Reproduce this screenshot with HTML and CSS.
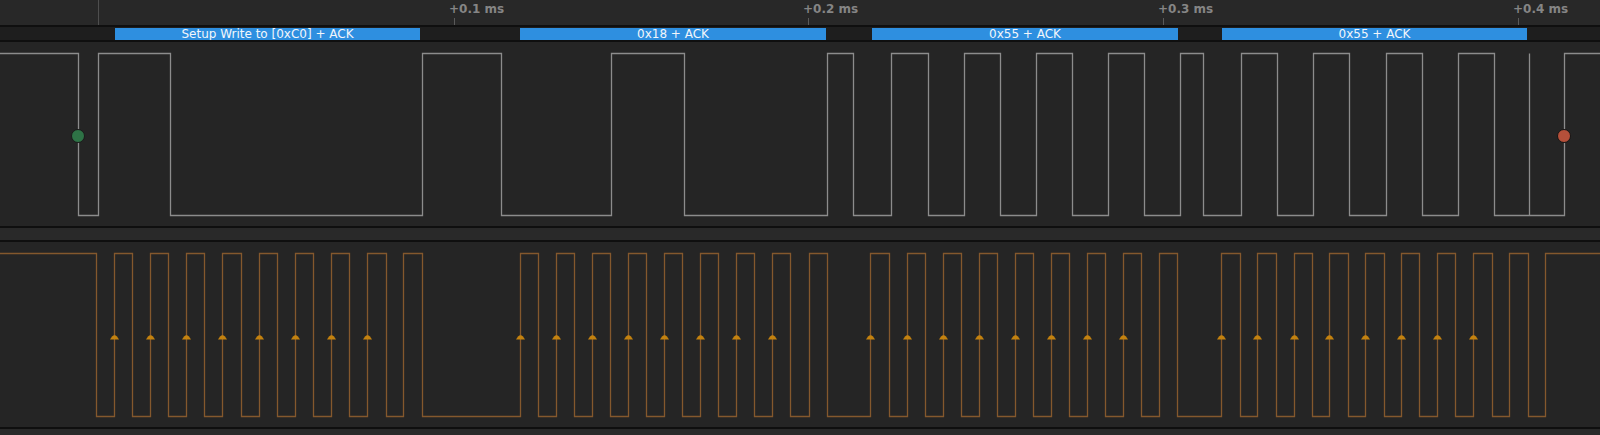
FILE: index.html
```html
<!DOCTYPE html>
<html>
<head>
<meta charset="utf-8">
<link rel="stylesheet" href="styles.css">
</head>
<body>
<div class="app">
  <div class="header">
    <div class="start-line"></div>
    <div class="tick" style="left:449px"><span class="tick-label">+0.1 ms</span><span class="tick-mark"></span></div>
    <div class="tick" style="left:803px"><span class="tick-label">+0.2 ms</span><span class="tick-mark"></span></div>
    <div class="tick" style="left:1158px"><span class="tick-label">+0.3 ms</span><span class="tick-mark"></span></div>
    <div class="tick" style="left:1513px"><span class="tick-label">+0.4 ms</span><span class="tick-mark"></span></div>
  </div>
  <div class="rule"></div>
  <div class="annot">
    <div class="bar" style="left:115px;width:305px">Setup Write to [0xC0] + ACK</div>
    <div class="bar" style="left:520px;width:306px">0x18 + ACK</div>
    <div class="bar" style="left:872px;width:306px">0x55 + ACK</div>
    <div class="bar" style="left:1222px;width:305px">0x55 + ACK</div>
  </div>
  <div class="rule"></div>
  <div class="chan chan-sda">
    <svg class="wave" width="1600" height="184" viewBox="0 0 1600 184">
      <path class="sda" d="M0 11.5 H78.5 V173.5 H98.5 V11.5 H170.5 V173.5 H422.5 V11.5 H501.5 V173.5 H611.5 V11.5 H684.5 V173.5 H827.5 V11.5 H853.5 V173.5 H891.5 V11.5 H928.5 V173.5 H964.5 V11.5 H1000.5 V173.5 H1036.5 V11.5 H1072.5 V173.5 H1108.5 V11.5 H1144.5 V173.5 H1180.5 V11.5 H1203.5 V173.5 H1241.5 V11.5 H1277.5 V173.5 H1313.5 V11.5 H1349.5 V173.5 H1386.5 V11.5 H1422.5 V173.5 H1458.5 V11.5 H1494.5 V173.5 H1564.5 V11.5 H1600 M1529.5 11.5 V173.5"/>
      <circle class="mark-start" cx="78" cy="94" r="6.5"/>
      <circle class="mark-stop" cx="1564" cy="94" r="6.5"/>
    </svg>
  </div>
  <div class="rule"></div>
  <div class="gap"></div>
  <div class="rule"></div>
  <div class="chan chan-scl">
    <svg class="wave" width="1600" height="185" viewBox="0 0 1600 185">
      <defs>
        <path id="arr" d="M-4.5 97.5 L-2.5 94.5 Q0 92 2.5 94.5 L4.5 97.5 Z"/>
      </defs>
      <path class="scl" d="M0 11.5 H96.5 V174.5 H114.5 V11.5 H132.5 V174.5 H150.5 V11.5 H168.5 V174.5 H186.5 V11.5 H204.5 V174.5 H222.5 V11.5 H241.5 V174.5 H259.5 V11.5 H277.5 V174.5 H295.5 V11.5 H313.5 V174.5 H331.5 V11.5 H349.5 V174.5 H367.5 V11.5 H386.5 V174.5 H403.5 V11.5 H422.5 V174.5 H520.5 V11.5 H538.5 V174.5 H556.5 V11.5 H574.5 V174.5 H592.5 V11.5 H610.5 V174.5 H628.5 V11.5 H646.5 V174.5 H664.5 V11.5 H682.5 V174.5 H700.5 V11.5 H718.5 V174.5 H736.5 V11.5 H754.5 V174.5 H772.5 V11.5 H790.5 V174.5 H809.5 V11.5 H827.5 V174.5 H870.5 V11.5 H889.5 V174.5 H907.5 V11.5 H925.5 V174.5 H943.5 V11.5 H961.5 V174.5 H979.5 V11.5 H997.5 V174.5 H1015.5 V11.5 H1033.5 V174.5 H1051.5 V11.5 H1069.5 V174.5 H1087.5 V11.5 H1105.5 V174.5 H1123.5 V11.5 H1141.5 V174.5 H1159.5 V11.5 H1177.5 V174.5 H1221.5 V11.5 H1240.5 V174.5 H1257.5 V11.5 H1276.5 V174.5 H1294.5 V11.5 H1312.5 V174.5 H1329.5 V11.5 H1348.5 V174.5 H1365.5 V11.5 H1384.5 V174.5 H1401.5 V11.5 H1419.5 V174.5 H1437.5 V11.5 H1455.5 V174.5 H1473.5 V11.5 H1492.5 V174.5 H1509.5 V11.5 H1528.5 V174.5 H1545.5 V11.5 H1600"/>
      <g class="arrows">
        <use href="#arr" x="114.5"/><use href="#arr" x="150.5"/><use href="#arr" x="186.5"/><use href="#arr" x="222.5"/>
        <use href="#arr" x="259.5"/><use href="#arr" x="295.5"/><use href="#arr" x="331.5"/><use href="#arr" x="367.5"/>
        <use href="#arr" x="520.5"/><use href="#arr" x="556.5"/><use href="#arr" x="592.5"/><use href="#arr" x="628.5"/>
        <use href="#arr" x="664.5"/><use href="#arr" x="700.5"/><use href="#arr" x="736.5"/><use href="#arr" x="772.5"/>
        <use href="#arr" x="870.5"/><use href="#arr" x="907.5"/><use href="#arr" x="943.5"/><use href="#arr" x="979.5"/>
        <use href="#arr" x="1015.5"/><use href="#arr" x="1051.5"/><use href="#arr" x="1087.5"/><use href="#arr" x="1123.5"/>
        <use href="#arr" x="1221.5"/><use href="#arr" x="1257.5"/><use href="#arr" x="1294.5"/><use href="#arr" x="1329.5"/>
        <use href="#arr" x="1365.5"/><use href="#arr" x="1401.5"/><use href="#arr" x="1437.5"/><use href="#arr" x="1473.5"/>
      </g>
    </svg>
  </div>
  <div class="rule"></div>
  <div class="footer"></div>
</div>
</body>
</html>
```
FILE: styles.css
```css
html, body {
  margin: 0;
  padding: 0;
  background: #262626;
}
.app {
  width: 1600px;
  height: 435px;
  overflow: hidden;
  display: flex;
  flex-direction: column;
  font-family: "DejaVu Sans", sans-serif;
}
.header {
  height: 25px;
  flex: none;
  background: #282828;
  position: relative;
}
.start-line {
  position: absolute;
  left: 98px;
  top: 0;
  width: 1px;
  height: 25px;
  background: #4e4e4e;
}
.tick {
  position: absolute;
  top: 0;
  height: 25px;
  width: 70px;
}
.tick-label {
  position: absolute;
  left: 0;
  top: 2px;
  font-size: 12px;
  line-height: 14px;
  font-weight: bold;
  color: #858585;
  white-space: nowrap;
}
.tick-mark {
  position: absolute;
  left: 5px;
  top: 18px;
  width: 1px;
  height: 7px;
  background: #5a5a5a;
}
.rule {
  height: 2px;
  flex: none;
  background: #0f0f0f;
}
.annot {
  height: 13px;
  flex: none;
  background: #1e1e1e;
  position: relative;
}
.bar {
  position: absolute;
  top: 1px;
  height: 12px;
  background: #2e8fe0;
  color: #f2f6fb;
  font-size: 12px;
  line-height: 12px;
  text-align: center;
  white-space: nowrap;
  overflow: hidden;
}
.chan {
  flex: none;
  background: #252525;
}
.chan-sda { height: 184px; }
.chan-scl { height: 185px; }
.wave { display: block; }
.gap {
  height: 12px;
  flex: none;
  background: #292929;
}
.footer {
  height: 6px;
  flex: none;
  background: #292929;
}
.sda {
  fill: none;
  stroke: #8c8c8c;
  stroke-width: 1.3;
}
.scl {
  fill: none;
  stroke: #84582d;
  stroke-width: 1.3;
}
.arrows {
  fill: #c4820f;
}
.mark-start {
  fill: #2e7346;
  stroke: #1a1a1a;
  stroke-width: 1;
}
.mark-stop {
  fill: #b5503a;
  stroke: #151515;
  stroke-width: 1;
}
```
